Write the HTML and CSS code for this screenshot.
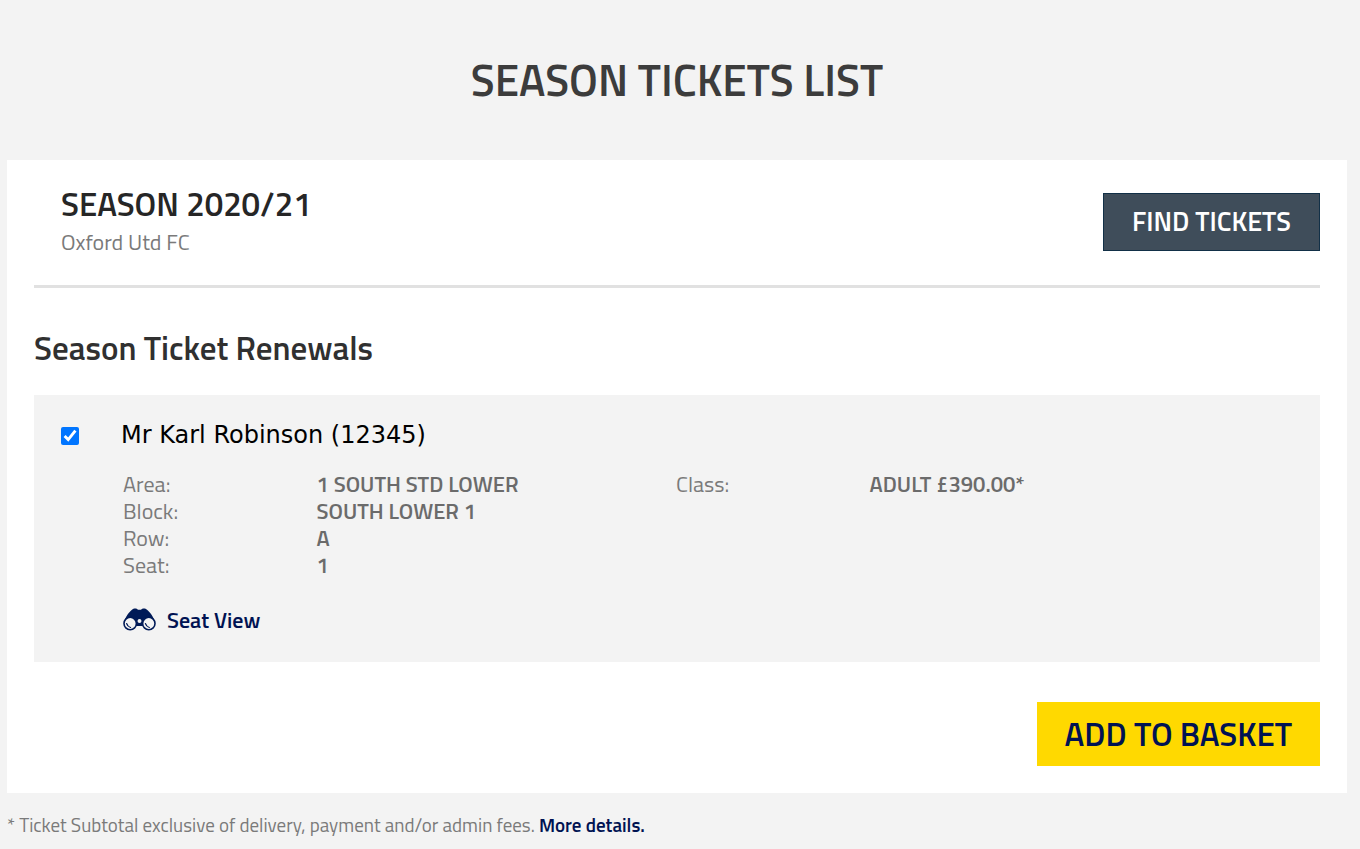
FILE: index.html
```html
<!DOCTYPE html>
<html lang="en">
<head>
    <meta charset="UTF-8">
    <meta name="viewport" content="width=device-width, initial-scale=1">
    <title>Season Tickets List</title>
    <link rel="stylesheet" href="styles.css">
</head>
<body>
<h1 class="page-title">SEASON TICKETS LIST</h1>
<main class="card">
    <header class="season">
        <div class="season-info">
            <h2 class="season-name">SEASON 2020/21</h2>
            <p class="season-club">Oxford Utd FC</p>
        </div>
        <button type="button" class="btn btn-find">FIND TICKETS</button>
    </header>
    <form class="renewals">
        <h2 class="renewals-title">Season Ticket Renewals</h2>
        <div class="ticket">
            <input type="checkbox" id="ticket-1" class="ticket-check" checked>
            <div class="ticket-body">
                <label for="ticket-1" class="ticket-name">Mr Karl Robinson (12345)</label>
                <div class="details">
                    <dl class="detail-list">
                        <dt>Area:</dt>
                        <dd>1 SOUTH STD LOWER</dd>
                        <dt>Block:</dt>
                        <dd>SOUTH LOWER 1</dd>
                        <dt>Row:</dt>
                        <dd>A</dd>
                        <dt>Seat:</dt>
                        <dd>1</dd>
                    </dl>
                    <dl class="detail-list">
                        <dt>Class:</dt>
                        <dd>ADULT £390.00*</dd>
                    </dl>
                </div>
                <a href="#" class="seat-view">
                    <svg class="seat-icon" viewBox="0 0 34 26" width="34" height="26" aria-hidden="true">
                        <path fill="#001a57" d="M1 14C2.500 9 6 4 9 1.800C10.500 .3 13.500 0 15 1.800H18C19.500 0 22.500 .3 24 1.800C27 4 30.500 9 32 14L23 18H10Z"/>
                        <circle cx="7.200" cy="15.500" r="6.200" fill="#f3f3f3" stroke="#001a57" stroke-width="1.600"/>
                        <circle cx="25.800" cy="15.500" r="6.200" fill="#f3f3f3" stroke="#001a57" stroke-width="1.600"/>
                        <circle cx="16.500" cy="13" r="2.600" fill="#f3f3f3" stroke="#001a57" stroke-width="1.200"/>
                        <path fill="none" stroke="#001a57" stroke-width="1.200" stroke-linecap="round" d="M3.600 15.500Q4.500 18.500 7.500 19.500M22.400 15.500Q23.300 18.500 26.300 19.500"/>
                    </svg>
                    Seat View
                </a>
            </div>
        </div>
        <button type="button" class="btn btn-basket">ADD TO BASKET</button>
    </form>
</main>
<p class="note">* Ticket Subtotal exclusive of delivery, payment and/or admin fees. <a href="#">More details.</a></p>
</body>
</html>
```

FILE: styles.css
```css
*{
    box-sizing: border-box;
    margin: 0;
    padding: 0;
}
body{
    padding: 0 13px 0 7px;
    background: #f3f3f3;
    color: #7a7a7a;
    font: 22px/27px "Titillium Web", Roboto, "Liberation Sans", sans-serif;
}
a{
    color: #001252;
    font-weight: 600;
    text-decoration: none;
}
.page-title{
    padding: 50px 0;
    color: #3c3c3c;
    font-size: 44px;
    font-weight: 600;
    line-height: 60px;
    text-align: center;
}
.card{
    padding: 27px;
    background: #fff;
}
.season{
    display: flex;
    justify-content: space-between;
    align-items: flex-start;
    padding: 6px 0 31px 27px;
    border-bottom: 3px solid #e1e1e1;
}
.season-name{
    color: #262626;
    font-size: 33px;
    font-weight: 600;
    line-height: 22px;
    margin-bottom: 15px;
}
.season-club{
    line-height: 24px;
}
.btn{
    border: 0;
    font-family: inherit;
    font-weight: 600;
    cursor: pointer;
}
.btn-find{
    height: 58px;
    padding: 0 28px 3px;
    border: 1px solid #123047;
    background: #3f4d5a;
    color: #fff;
    font-size: 27px;
}
.renewals{
    display: flex;
    flex-direction: column;
}
.renewals-title{
    margin: 40px 0 27px;
    color: #303030;
    font-size: 33px;
    font-weight: 600;
    line-height: 40px;
}
.ticket{
    display: flex;
    gap: 42px;
    padding: 24px 27px 22px;
    background: #f3f3f3;
}
.ticket-check{
    flex: none;
    width: 18px;
    height: 18px;
    margin-top: 8px;
    accent-color: #0075ff;
}
.ticket-body{
    flex: 1;
}
.ticket-name{
    display: block;
    margin-bottom: 20px;
    color: #000;
    font-family: Verdana, "DejaVu Sans", sans-serif;
    font-size: 24px;
    line-height: 32px;
}
.details{
    display: grid;
    grid-template-columns: 1fr 1fr;
    padding: 0 64px 0 2px;
}
.detail-list{
    display: grid;
    grid-template-columns: 35% 65%;
    align-content: start;
}
.detail-list dd{
    color: #6b6b6b;
    font-weight: 600;
}
.seat-view{
    display: inline-flex;
    align-items: center;
    gap: 10px;
    margin-top: 28px;
    padding-left: 2px;
}
.btn-basket{
    align-self: flex-end;
    height: 64px;
    margin-top: 40px;
    padding: 0 28px;
    background: #ffd900;
    color: #001252;
    font-size: 33px;
}
.note{
    padding: 18px 0 10px;
    font-size: 19px;
}
```
